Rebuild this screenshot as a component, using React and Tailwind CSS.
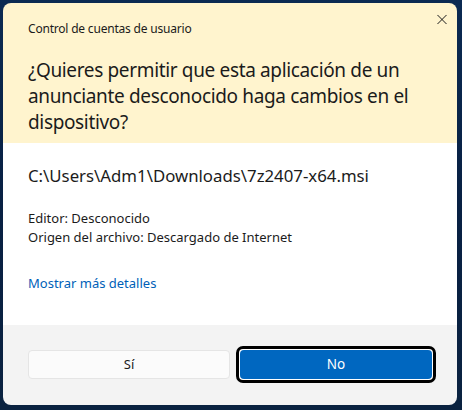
import React from "react"

const font = { fontFamily: '"Segoe UI", "Noto Sans", "Open Sans", sans-serif' }

function CloseIcon() {
  return (
    <svg width="11" height="11" viewBox="0 0 11 11" fill="none">
      <path d="M0.5 0.5L10.5 10.5M10.5 0.5L0.5 10.5" stroke="#1b1b1b" strokeWidth="1.1" />
    </svg>
  )
}

export default function App() {
  return (
    <div
      className="w-[462px] h-[410px] pt-[3px] pl-[3px] pr-[5px] pb-[5px] bg-gradient-to-b from-[#0b2a52] via-[#082043] to-[#0a2240]"
      style={font}
    >
      <div className="h-full flex flex-col rounded-[8px] overflow-hidden text-[#1b1b1b]">
        {/* Header */}
        <div className="relative bg-[#fff4ce] h-[140px] pl-[25px] pr-4 pt-[18px]">
          <p className="text-[12px] leading-[16px] tracking-[-0.2px]">Control de cuentas de usuario</p>
          <h1 className="mt-[20px] text-[19px] leading-[26px] tracking-[-0.35px] whitespace-nowrap">
            ¿Quieres permitir que esta aplicación de un
            <br />
            anunciante desconocido haga cambios en el
            <br />
            dispositivo?
          </h1>
          <button className="absolute top-[11px] right-[10px] w-[10px] h-[10px] flex items-center justify-center">
            <CloseIcon />
          </button>
        </div>

        {/* Body */}
        <div className="bg-white h-[182px] pl-[25px] pt-[22px]">
          <p className="text-[16.8px] leading-[22px]">C:\Users\Adm1\Downloads\7z2407-x64.msi</p>
          <div className="mt-[22px] text-[13px] leading-[19px]">
            <p>Editor: Desconocido</p>
            <p>Origen del archivo: Descargado de Internet</p>
          </div>
          <a className="block mt-[27px] text-[13px] leading-[19px] text-[#005fb8]">Mostrar más detalles</a>
        </div>

        {/* Footer */}
        <div className="flex-1 bg-[#f3f3f3] pl-[25px] pt-[21px] flex items-start">
          <button className="mt-[4px] w-[202px] h-[29px] rounded-[4px] border border-[#e5e5e5] bg-[#fbfbfb] text-[13px]">
            Sí
          </button>
          <div className="ml-[6px] w-[200px] h-[37px] rounded-[7px] border-[3px] border-black bg-white p-[1px]">
            <button className="w-full h-full rounded-[4px] bg-[#0067c0] text-white text-[13.5px]">No</button>
          </div>
        </div>
      </div>
    </div>
  )
}
